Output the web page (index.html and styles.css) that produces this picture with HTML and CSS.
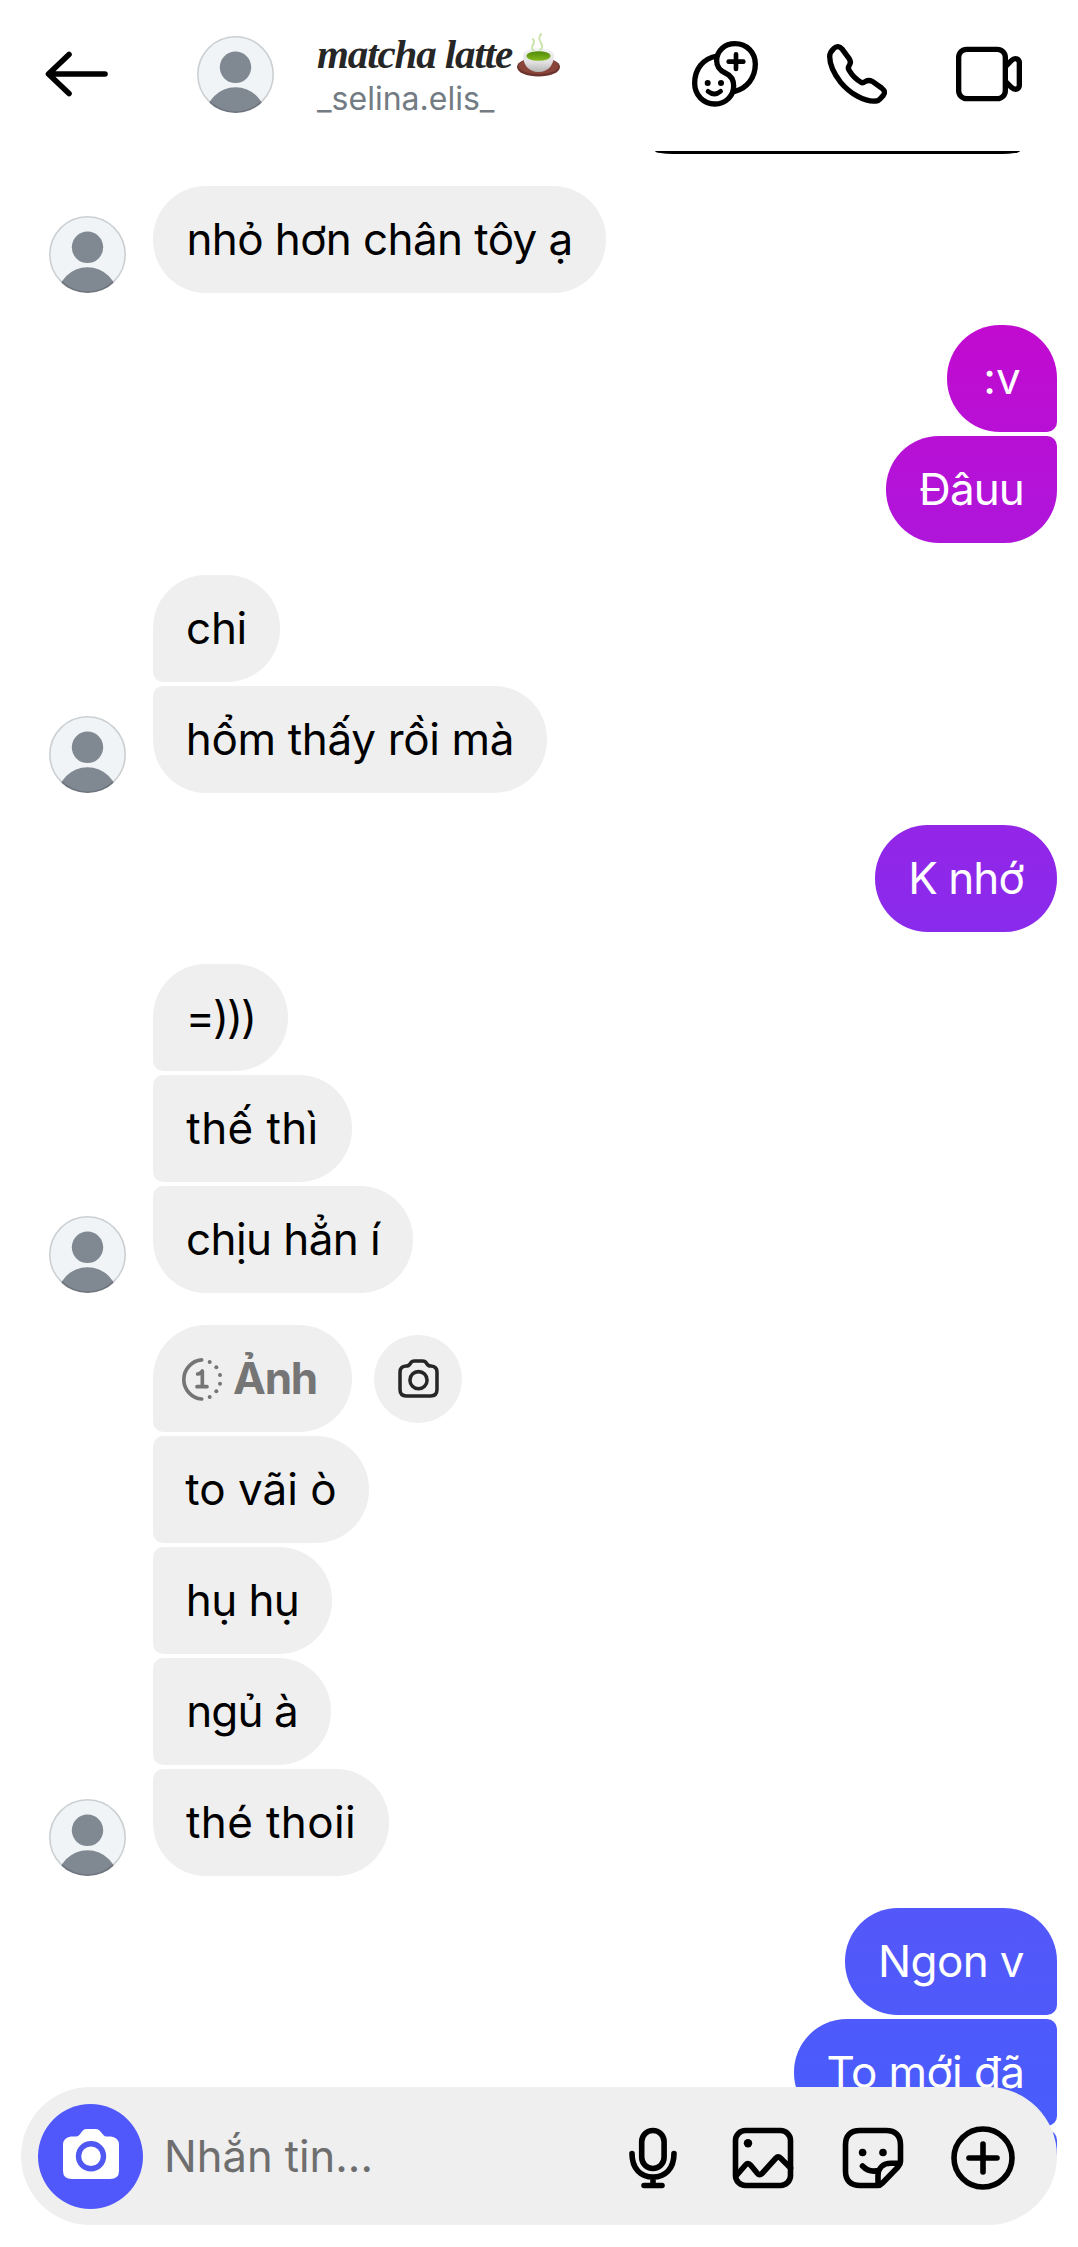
FILE: index.html
```html
<!DOCTYPE html>
<html lang="vi">
<head>
<meta charset="utf-8">
<title>matcha latte</title>
<link rel="stylesheet" href="styles.css">
</head>
<body>
<svg class="defs" aria-hidden="true">
  <defs>
    <symbol id="person" viewBox="0 0 77 77">
      <clipPath id="round"><circle cx="38.5" cy="38.5" r="38.5"/></clipPath>
      <g clip-path="url(#round)">
        <rect width="77" height="77" fill="#f0f4f6"/>
        <circle cx="38.5" cy="31.3" r="15.7" fill="#808892"/>
        <circle cx="38.5" cy="81.2" r="30" fill="#808892"/>
      </g>
      <circle cx="38.5" cy="38.5" r="37.7" fill="none" stroke="#000" stroke-opacity=".15" stroke-width="1.6"/>
    </symbol>
  </defs>
</svg>

<div class="screen">
  <header class="header">
    <svg class="back line" viewBox="0 0 64 46"><path d="M4 23H60M24 3.5 3.500 23 24 42.500"/></svg>
    <svg class="avatar"><use href="#person"/></svg>
    <div class="who">
      <div class="name"><span>matcha latte</span>
        <svg class="tea" viewBox="0 0 43 44">
          <defs>
            <linearGradient id="cup" x2="0" y2="1"><stop offset="0" stop-color="#f4f4f4"/><stop offset=".6" stop-color="#e0e0e0"/><stop offset="1" stop-color="#b4b4b4"/></linearGradient>
            <linearGradient id="brew" x2="0" y2="1"><stop offset="0" stop-color="#4f8a0c"/><stop offset="1" stop-color="#85b91c"/></linearGradient>
          </defs>
          <ellipse cx="21.500" cy="34" rx="21.500" ry="9.500" fill="#6d332d"/>
          <ellipse cx="21.500" cy="33" rx="20" ry="8" fill="#8a453b"/>
          <path d="M6 22C6 13 37 13 37 22C37 31 32 39 21.500 39S6 31 6 22Z" fill="url(#cup)"/>
          <ellipse cx="21.500" cy="23" rx="12" ry="4.800" fill="url(#brew)"/>
          <path d="M17 18C11 13 20 11 16 6M23 17C30 12 18 8 24 1" fill="none" stroke="#c9e3aa" stroke-width="2" stroke-linecap="round"/>
        </svg>
      </div>
      <div class="handle">_selina.elis_</div>
    </div>
    <svg class="act line" viewBox="270 111 222 222">
      <path d="M356 168C314 176 290 208 290 250C290 286 317 312 350 312C385 312 407 286 407 258C407 240 398 226 382 219C363 210 356 198 356 182C356 152 380 131 411 131C447 131 472 158 472 192C472 234 446 265 410 274"/>
      <path class="mid" d="M330 274Q350 290 368 274M414 163V207M392 185H436"/>
      <circle class="dot" cx="329" cy="249" r="9"/><circle class="dot" cx="369" cy="249" r="9"/>
    </svg>
    <svg class="act line" viewBox="665 110 222 222">
      <path d="M706 145Q719 132 732 147L752 174Q760 185 753 195Q747 203 753 211Q767 234 787 245Q794 250 802 243Q811 238 822 243L850 263Q864 274 855 285L845 296Q840 302 834 302C800 306 755 280 727 246C705 218 694 190 694 168Q694 156 706 145Z"/>
    </svg>
    <svg class="act line" viewBox="1062 111 222 222">
      <rect x="1082" y="148" width="140" height="148" rx="24"/>
      <path d="M1224 198 1240 182Q1249 173 1257 177Q1264 180 1264 188V256Q1264 264 1257 267Q1249 270 1240 262L1224 246"/>
    </svg>
  </header>

  <main class="chat">
    <div class="edge"></div>

    <section class="group in">
      <svg class="avatar"><use href="#person"/></svg>
      <div class="stack"><div class="bubble t2 w453">nhỏ hơn chân tôy ạ</div></div>
    </section>

    <section class="group out">
      <div class="stack">
        <div class="bubble w110">:v</div>
        <div class="bubble t3 w171">Đâuu</div>
      </div>
    </section>

    <section class="group in">
      <svg class="avatar"><use href="#person"/></svg>
      <div class="stack">
        <div class="bubble t1 w127">chi</div>
        <div class="bubble t1 w394">hổm thấy rồi mà</div>
      </div>
    </section>

    <section class="group out">
      <div class="stack"><div class="bubble t3 w182">K nhớ</div></div>
    </section>

    <section class="group in">
      <svg class="avatar"><use href="#person"/></svg>
      <div class="stack">
        <div class="bubble t4 w135">=)))</div>
        <div class="bubble l1 w199">thế thì</div>
        <div class="bubble t2 w260">chịu hẳn í</div>
      </div>
    </section>

    <section class="group in">
      <svg class="avatar"><use href="#person"/></svg>
      <div class="stack">
        <div class="row">
          <div class="bubble photo w199">
            <svg class="once" viewBox="113 134 138 138">
              <path d="M184 145.500A59 59 0 0 0 184 263M172 188Q181 187 186 179V226M170 226H200"/>
              <g class="beads"><circle cx="208" cy="152" r="6"/><circle cx="228" cy="168" r="6"/><circle cx="239" cy="191" r="6"/><circle cx="239" cy="217" r="6"/><circle cx="228" cy="240" r="6"/><circle cx="208" cy="257" r="6"/></g>
            </svg>
            <span>Ảnh</span>
          </div>
          <div class="reply">
            <svg viewBox="773 147 122 116">
              <path d="M798 257Q779 257 779 238V186Q779 169 797 168Q806 168 810 160Q814 153 822 153H846Q854 153 858 160Q862 168 871 168Q889 169 889 186V238Q889 257 870 257Z"/>
              <circle cx="834" cy="210" r="25.500"/>
            </svg>
          </div>
        </div>
        <div class="bubble w216">to vãi ò</div>
        <div class="bubble t2 w179">hụ hụ</div>
        <div class="bubble t3 w178">ngủ à</div>
        <div class="bubble l1 w236">thé thoii</div>
      </div>
    </section>

    <section class="group out">
      <div class="stack">
        <div class="bubble t2 w212">Ngon v</div>
        <div class="bubble t2 w263">To mới đã</div>
        <div class="bubble w263"></div>
      </div>
    </section>
  </main>

  <footer class="composer">
    <div class="camera">
      <svg viewBox="0 0 56 50">
        <path d="M8 7.500H13Q16 7.500 18 3.800Q20 0 23.500 0H33Q36 0 38.500 3.800Q41 7.500 43 7.500H48Q56 8.500 56 16V42Q56 50 47 50H9Q0 50 0 42V16Q0 8.500 8 7.500Z" fill="#fff"/>
        <circle cx="28" cy="27.300" r="12.500" fill="none" stroke="#5058f2" stroke-width="5.400"/>
      </svg>
    </div>
    <div class="field">Nhắn tin...</div>
    <div class="tools">
      <svg class="tool line" viewBox="0 0 64 64">
        <rect x="20.700" y="4.500" width="22.400" height="38" rx="11.200"/>
        <path d="M11 27.500C11 43 20 51 32 51S53 43 53 27.500M32 51V59M23 59.500H41"/>
      </svg>
      <svg class="tool line" viewBox="0 0 64 64">
        <rect x="4.500" y="4.500" width="55" height="55" rx="10"/>
        <path d="M5 50 14.500 39Q17 36 19.500 39L26.500 47.500Q28.500 50 31 47.500L45 32Q47 29.500 49.500 32L59.500 42"/>
        <circle class="dot" cx="17" cy="17.200" r="4.200"/>
      </svg>
      <svg class="tool line" viewBox="0 0 64 64">
        <path d="M37 59.500H19Q4.500 59.500 4.500 45V19Q4.500 4.500 19 4.500H45Q59.500 4.500 59.500 19V35.500Q59.500 38.500 57 41L41.500 57Q39 59.500 37 59.500V50C37 42 42 37.300 50 37.300H59M21.500 40Q28 46.800 37.500 44.500"/>
        <circle class="dot" cx="21.600" cy="26.500" r="3.800"/><circle class="dot" cx="42" cy="26.500" r="3.800"/>
      </svg>
      <svg class="tool line" viewBox="0 0 64 64">
        <circle cx="32" cy="32" r="29"/><path d="M32 18V46M18 32H46"/>
      </svg>
    </div>
  </footer>
</div>
</body>
</html>
```
FILE: styles.css
```css
* { box-sizing: border-box; }
body {
  margin: 0;
  background: #fff;
  color: #000;
  font-family: Inter, Roboto, sans-serif;
}
svg { display: block; flex: none; overflow: visible; }
.defs { position: absolute; width: 0; height: 0; }
.screen { width: 1078px; height: 2247px; overflow: hidden; }

.line {
  fill: none;
  stroke: #000;
  stroke-width: 5.6;
  stroke-linecap: round;
  stroke-linejoin: round;
}
.line .dot { fill: #000; stroke: none; }

.header {
  display: flex;
  align-items: center;
  height: 151px;
  padding: 0 17px 3px 45px;
}
.back { width: 64px; height: 46px; }
.avatar { width: 77px; height: 77px; }
.header .avatar { margin-left: 88px; }
.who { width: 371px; margin-left: 43px; margin-top: 1px; }
.name {
  display: flex;
  height: 48px;
  color: #262626;
  font: italic bold 41px/48px "Liberation Serif", serif;
  letter-spacing: -1.1px;
  white-space: nowrap;
}
.tea { width: 43px; height: 44px; margin: 3px 0 0 5px; }
.handle {
  height: 42px;
  color: #737b83;
  font-size: 32px;
  line-height: 42px;
}
.act { width: 74px; height: 74px; stroke-width: 16; }
.act + .act { margin-left: 58px; }
.act .mid { stroke-width: 14; }

.chat { height: 2005px; overflow: hidden; }
.edge {
  width: 365px;
  height: 3px;
  margin-left: 655px;
  border-radius: 0 0 18px 18px / 0 0 3px 3px;
  background: #000;
}

.group {
  display: flex;
  align-items: flex-end;
  margin-top: 32px;
  padding: 0 21px 0 49px;
}
.stack { display: flex; flex-direction: column; gap: 4px; }
.in .stack { margin-left: 27px; align-items: flex-start; }
.out { justify-content: flex-end; }
.out .stack { align-items: flex-end; }

.bubble {
  height: 107px;
  border-radius: 53px;
  font-size: 44px;
  line-height: 107px;
  text-align: center;
  white-space: nowrap;
}
.in .bubble { background: #efefef; }
.out .bubble {
  color: #fff;
  background: linear-gradient(#c20ad0 325px, #ae16da 545px, #892bec 932px, #5457fa 1908px, #4a5cfc 2100px) fixed;
}
.in .stack > :not(:last-child).bubble,
.in .row .bubble { border-bottom-left-radius: 10px; }
.in .stack > :not(:first-child).bubble { border-top-left-radius: 10px; }
.out .stack > :not(:last-child) { border-bottom-right-radius: 10px; }
.out .stack > :not(:first-child) { border-top-right-radius: 10px; }

.w110 { width: 110px; }
.w127 { width: 127px; }
.w135 { width: 135px; }
.w171 { width: 171px; }
.w178 { width: 178px; }
.w179 { width: 179px; }
.w182 { width: 182px; }
.w199 { width: 199px; }
.w212 { width: 212px; }
.w216 { width: 216px; }
.w236 { width: 236px; }
.w260 { width: 260px; }
.w263 { width: 263px; }
.w394 { width: 394px; }
.w453 { width: 453px; }

.t1 { letter-spacing: -.33px; }
.t2 { letter-spacing: -.6px; }
.t3 { letter-spacing: -.9px; }
.t4 { letter-spacing: -2px; }
.l1 { letter-spacing: .4px; }

.row { display: flex; align-items: center; gap: 22px; }
.photo {
  display: flex;
  align-items: center;
  padding-left: 25px;
  color: #757575;
  font-weight: 700;
  letter-spacing: -1.2px;
}
.photo span { margin-left: 9px; }
.once {
  width: 46px;
  height: 46px;
  fill: none;
  stroke: #757575;
  stroke-width: 11;
  stroke-linecap: round;
  stroke-linejoin: round;
}
.beads { fill: #757575; stroke: none; }
.reply {
  display: flex;
  align-items: center;
  justify-content: center;
  width: 88px;
  height: 88px;
  border-radius: 50%;
  background: #efefef;
}
.reply svg {
  width: 41px;
  height: 39px;
  fill: none;
  stroke: #262626;
  stroke-width: 10.5;
}

.composer {
  position: relative;
  display: flex;
  align-items: center;
  width: 1036px;
  height: 138px;
  margin: -69px 0 0 21px;
  padding: 0 42px 0 17px;
  border-radius: 69px;
  background: #efefef;
}
.camera {
  display: flex;
  align-items: center;
  justify-content: center;
  width: 105px;
  height: 105px;
  padding-bottom: 5px;
  border-radius: 50%;
  background: #5058fb;
}
.camera svg { width: 56px; height: 50px; }
.field {
  flex: 1;
  margin-left: 21px;
  color: #6e6e6e;
  font-size: 43.500px;
}
.tools { display: flex; gap: 46px; padding-top: 3px; }
.tool { width: 64px; height: 64px; }
```
